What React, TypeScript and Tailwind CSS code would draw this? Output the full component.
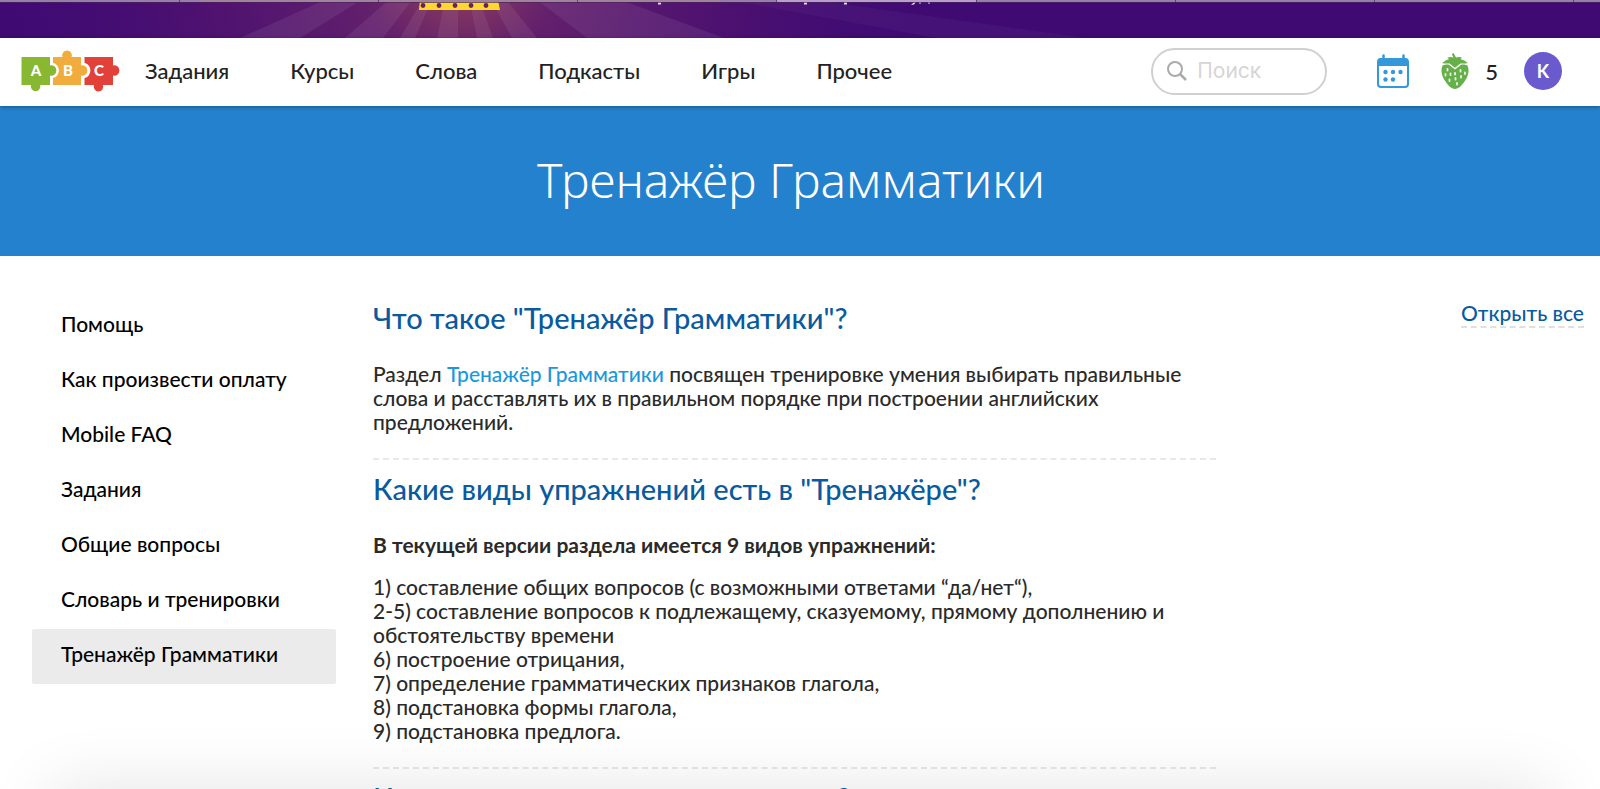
import type { ReactNode } from 'react'

const NAV_LINKS = ['Задания', 'Курсы', 'Слова', 'Подкасты', 'Игры', 'Прочее']

const HELP_TOPICS = [
  'Помощь',
  'Как произвести оплату',
  'Mobile FAQ',
  'Задания',
  'Общие вопросы',
  'Словарь и тренировки',
  'Тренажёр Грамматики',
]

const EXERCISES = [
  '1) составление общих вопросов (с возможными ответами “да/нет“),',
  '2-5) составление вопросов к подлежащему, сказуемому, прямому дополнению и обстоятельству времени',
  '6) построение отрицания,',
  '7) определение грамматических признаков глагола,',
  '8) подстановка формы глагола,',
  '9) подстановка предлога.',
]

// [left, right] x of each ray where it meets the bottom edge of the banner
const RAYS = [
  [240, 300],
  [345, 383],
  [400, 415],
  [437, 458],
  [477, 493],
  [512, 537],
  [587, 724],
]

const TAB_DIVIDERS = [179, 378, 577, 776, 976, 1175, 1374, 1573]

function PromoBanner() {
  return (
    <div className="relative h-[38px] shrink-0 overflow-hidden bg-[#3f0b73]" aria-hidden="true">
      <svg className="absolute top-0 left-0" width="1600" height="38">
        <defs>
          <radialGradient id="glow" gradientUnits="userSpaceOnUse" cx="460" cy="-40" r="480">
            <stop offset="0" stopColor="#c0604a" stopOpacity="0.75" />
            <stop offset="0.22" stopColor="#a04460" stopOpacity="0.36" />
            <stop offset="0.6" stopColor="#702068" stopOpacity="0.24" />
            <stop offset="1" stopColor="#3f0b73" stopOpacity="0" />
          </radialGradient>
        </defs>
        <rect width="1600" height="38" fill="url(#glow)" />
        {RAYS.map(([a, b]) => (
          <path key={a} d={`M458 -60 L${a} 38 H${b} Z`} fill="#fff" fillOpacity="0.07" />
        ))}
        <path d="M458 -50 L1600 110 V160 Z" fill="#fff" fillOpacity="0.03" />
        <path d="M420 0H498L500 10H419Z" fill="#fcd82f" />
        {[423, 439, 455, 471, 486].map((x) => (
          <circle key={x} cx={x} cy="5.5" r="2.4" fill="#6b2058" />
        ))}
        <path
          d="M658 2h3v2.500h-3zM804 2h3v2.500h-3zM844 2h3v2.500h-3zM911 5l3-.5 2-2.500h-2zM919 2h2v1.500h-2zM928 2h2v1.500h-2z"
          fill="#e9dcf0"
        />
        <rect width="1600" height="2" fill="#957fa6" />
        <rect x="200" width="520" height="2" fill="#a58594" fillOpacity="0.7" />
        <rect x="776" width="200" height="2" fill="#b79fca" />
        {TAB_DIVIDERS.map((x) => (
          <rect key={x} x={x} width="1" height="2" fill="#5f4670" />
        ))}
        <rect y="2" width="1600" height="1" fill="#4b2263" fillOpacity="0.7" />
      </svg>
    </div>
  )
}

function Logo() {
  return (
    <svg width="100" height="42" viewBox="0 0 100 42" role="img" aria-label="ABC">
      <path
        d="M1.500 7H30V15.500A5 5.200 0 1 1 30 25.500V35H20.200A4.800 4.800 0 1 1 11 35H1.500Z"
        fill="#88b832"
      />
      <path
        d="M33 7H42.500A4.800 4.800 0 1 1 51.500 7H61V15.500A5 5.200 0 1 1 61 25.500V35H33V28A7 7.600 0 0 0 33 13Z"
        fill="#f0ac3c"
      />
      <path
        d="M64.500 7H93V15.500A5 5.200 0 1 1 93 25.500V35H83A4.800 4.800 0 1 1 74 35H64.500V28A7 7.600 0 0 0 64.500 13Z"
        fill="#e14138"
      />
      <g fill="#fff" fontSize="15" fontWeight="900" fontFamily="Lato, sans-serif" textAnchor="middle">
        <text x="16" y="26">A</text>
        <text x="48" y="26">B</text>
        <text x="79" y="26">C</text>
      </g>
    </svg>
  )
}

function CalendarIcon() {
  return (
    <svg width="32" height="34" viewBox="0 0 32 34" aria-hidden="true">
      <rect x="1" y="5" width="30" height="28" rx="3" fill="none" stroke="#3498db" strokeWidth="2" />
      <path d="M1 12V7a3 3 0 0 1 3-3h24a3 3 0 0 1 3 3v5z" fill="#3498db" />
      <path d="M6.500 1.500v5M26.500 1.500v5" stroke="#3498db" strokeWidth="2.500" strokeLinecap="round" />
      <g fill="#3498db">
        <circle cx="8.500" cy="18" r="2.200" />
        <circle cx="16" cy="18" r="2.200" />
        <circle cx="23.500" cy="18" r="2.200" />
        <circle cx="8.500" cy="25.500" r="2.200" />
        <circle cx="16" cy="25.500" r="2.200" />
      </g>
    </svg>
  )
}

function StrawberryIcon() {
  return (
    <svg width="28" height="36" viewBox="0 0 28 36" aria-hidden="true">
      <path
        d="M1.500 12.500C-.5 17 .5 22 3.500 27 6.500 32 10.500 36 14 36s7.500-4 10.500-9c3-5 4-10 2-14.500-2-1.200-4.500-1.200-6.500-.8L14 16.500 8 11.700c-2-.4-4.500-.4-6.500.8z"
        fill="#66b04a"
      />
      <path
        d="M10.800 1.300L12.500 0l2.500 4.500c2-.8 4-.8 6 0l-1.500 1.800c2.500.2 5 1.700 7.500 4-2.500.3-5 0-7.500.1L14 14.800 8.500 10.400c-2.500-.1-5 .2-7.500-.1C3.500 8 6 6.500 8 6.300L6.500 4.500c2-.8 4-.7 6 0z"
        fill="#66b04a"
      />
      <path
        d="M6.500 16v1.500M4.500 21v1.500M9.500 20.500V22M8.500 26.500V28M14 20v1.500M14.500 25v1.500M16 30v1.500M19.500 17v1.500M20 23v1.500M24 19.500V21"
        stroke="#f2faee"
        strokeWidth="1.800"
        strokeLinecap="round"
      />
    </svg>
  )
}

function Header() {
  return (
    <header className="relative z-10 flex h-[68px] shrink-0 items-center bg-white pr-[38px] pb-0.5 pl-5 shadow-[0_1px_4px_rgba(0,0,0,0.35)]">
      <a href="#home" className="mr-[25px] shrink-0">
        <Logo />
      </a>
      <nav className="flex gap-[61px] pb-0.5 text-[22px] font-medium text-[#222]">
        {NAV_LINKS.map((label) => (
          <a key={label} href="#nav">
            {label}
          </a>
        ))}
      </nav>
      <div className="ml-auto flex items-center">
        <label className="flex h-[47px] w-[176px] items-center rounded-full border-2 border-[#d0d0d0] pl-3.5">
          <svg width="20" height="20" viewBox="0 0 20 20" fill="none" stroke="#aaa" strokeWidth="2" aria-hidden="true">
            <circle cx="8" cy="8" r="7" />
            <path d="M13 13l6 6" strokeWidth="2.500" />
          </svg>
          <input
            type="search"
            aria-label="Поиск"
            placeholder="Поиск"
            className="ml-2.5 w-[110px] bg-transparent font-[Inter,sans-serif] text-[21px] outline-none placeholder:text-[#d5d5d5]"
          />
        </label>
        <button type="button" aria-label="Календарь" className="ml-[50px]">
          <CalendarIcon />
        </button>
        <button type="button" className="ml-8 flex items-center gap-4 text-[22px] font-medium text-[#222]">
          <StrawberryIcon />5
        </button>
        <button
          type="button"
          className="ml-[26px] size-[38px] rounded-full bg-[#6a5acd] text-[18px] leading-none font-bold text-white"
        >
          K
        </button>
      </div>
    </header>
  )
}

function Question({ title, children }: { title: string; children: ReactNode }) {
  return (
    <section className="border-b-2 border-dashed border-[#e8e8e8] pb-6">
      <h2 className="mb-[26px] pt-[11px] text-[29px] leading-9 font-medium text-[#0a5a9e]">{title}</h2>
      {children}
    </section>
  )
}

export default function App() {
  return (
    <div className="relative flex h-screen flex-col overflow-hidden bg-white font-[Lato,sans-serif]">
      <PromoBanner />
      <Header />
      <div className="flex h-[150px] shrink-0 items-center justify-center bg-[#2481cd] pr-[18px] pb-0.5">
        <h1 className="font-['Noto_Sans',sans-serif] text-[48px] leading-[60px] font-light text-white">
          Тренажёр Грамматики
        </h1>
      </div>

      <div className="flex items-start text-[21px] leading-6 font-medium">
        <aside className="mt-[43px] ml-8 w-[304px] shrink-0">
          <ul className="text-black">
            {HELP_TOPICS.map((topic, i) => (
              <li key={topic}>
                <a
                  href="#topic"
                  aria-current={i === HELP_TOPICS.length - 1 ? 'page' : undefined}
                  className="block rounded-xs px-[29px] pt-[13px] pb-[18px] aria-[current=page]:bg-[#ebebeb]"
                >
                  {topic}
                </a>
              </li>
            ))}
          </ul>
        </aside>

        <main className="mt-[33px] ml-[37px] w-[843px] text-[#2a2a2a]">
          <Question title={'Что такое "Тренажёр Грамматики"?'}>
            <p>
              Раздел{' '}
              <a href="#trainer" className="text-[#1b98da]">
                Тренажёр Грамматики
              </a>{' '}
              посвящен тренировке умения выбирать правильные слова и расставлять их в правильном порядке при построении
              английских предложений.
            </p>
          </Question>
          <Question title={'Какие виды упражнений есть в "Тренажёре"?'}>
            <p className="mb-[18px] font-bold">В текущей версии раздела имеется 9 видов упражнений:</p>
            {EXERCISES.map((line) => (
              <p key={line}>{line}</p>
            ))}
          </Question>
          <Question title="Как начисляется опыт за практику?">
            <p>За каждое правильно составленное предложение начисляется опыт.</p>
          </Question>
        </main>

        <button
          type="button"
          className="mt-[45px] mr-4 ml-auto shrink-0 border-b-2 border-dashed border-[#e0e0e0] pb-px text-[#0a5a9e]"
        >
          Открыть все
        </button>
      </div>

      {/* soft shade rising from the lower edge of the window */}
      <div className="pointer-events-none absolute inset-x-[50px] -bottom-[100px] h-[100px] shadow-[0_0_70px_rgba(0,0,0,0.11)]" />
    </div>
  )
}
